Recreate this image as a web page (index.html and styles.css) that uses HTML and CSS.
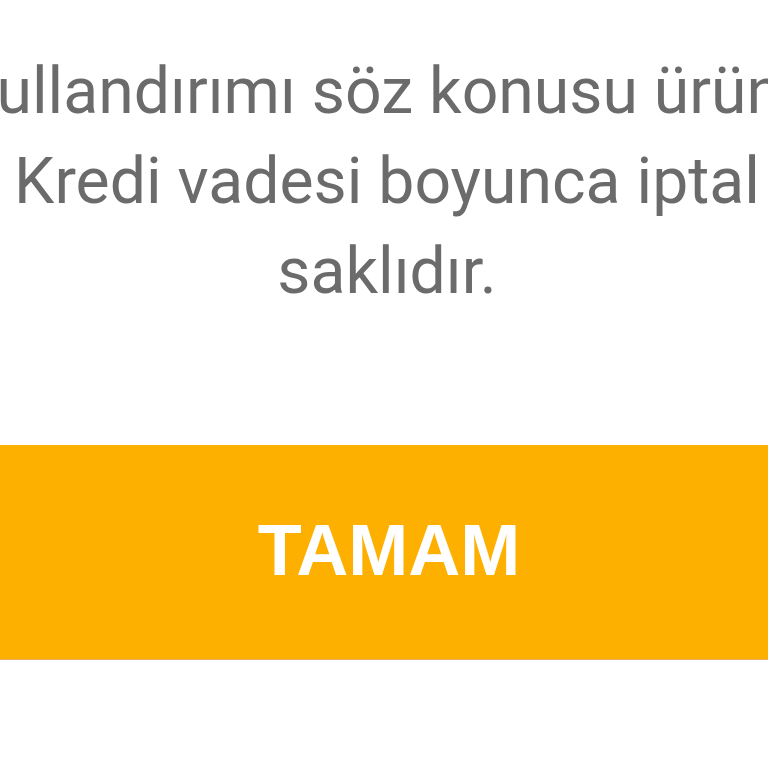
FILE: index.html
```
<!DOCTYPE html>
<html lang="tr">
<head>
<meta charset="utf-8">
<link rel="stylesheet" href="styles.css">
</head>
<body>
<div class="dialog">
  <div class="message">
    <div class="line line-first">kullandırımı söz konusu ürün</div>
    <div class="line">Kredi vadesi boyunca iptal</div>
    <div class="line">saklıdır.</div>
  </div>
  <div class="button">TAMAM</div>
</div>
</body>
</html>
```
FILE: styles.css
```
html, body {
  margin: 0;
  padding: 0;
  background: #ffffff;
}
body {
  width: 768px;
  height: 768px;
  overflow: hidden;
}
.dialog {
  display: flex;
  flex-direction: column;
  padding-top: 46px;
}
.message {
  display: flex;
  flex-direction: column;
  align-items: center;
  font-family: Roboto, "Noto Sans", sans-serif;
  font-size: 64.3px;
  line-height: 90px;
  color: #6b6b6b;
  margin-left: -192px;
  margin-right: -198px;
}
.line {
  white-space: nowrap;
}
.line-first {
  padding-right: 28px;
}
.button {
  margin-top: 129px;
  height: 215px;
  background: #fdb000;
  border-bottom: 1px solid #e6b060;
  color: #ffffff;
  font-family: "Liberation Sans", Arial, sans-serif;
  font-weight: bold;
  font-size: 72px;
  display: flex;
  align-items: center;
  justify-content: center;
  padding-bottom: 4px;
  padding-left: 10px;
  box-sizing: border-box;
}
```
